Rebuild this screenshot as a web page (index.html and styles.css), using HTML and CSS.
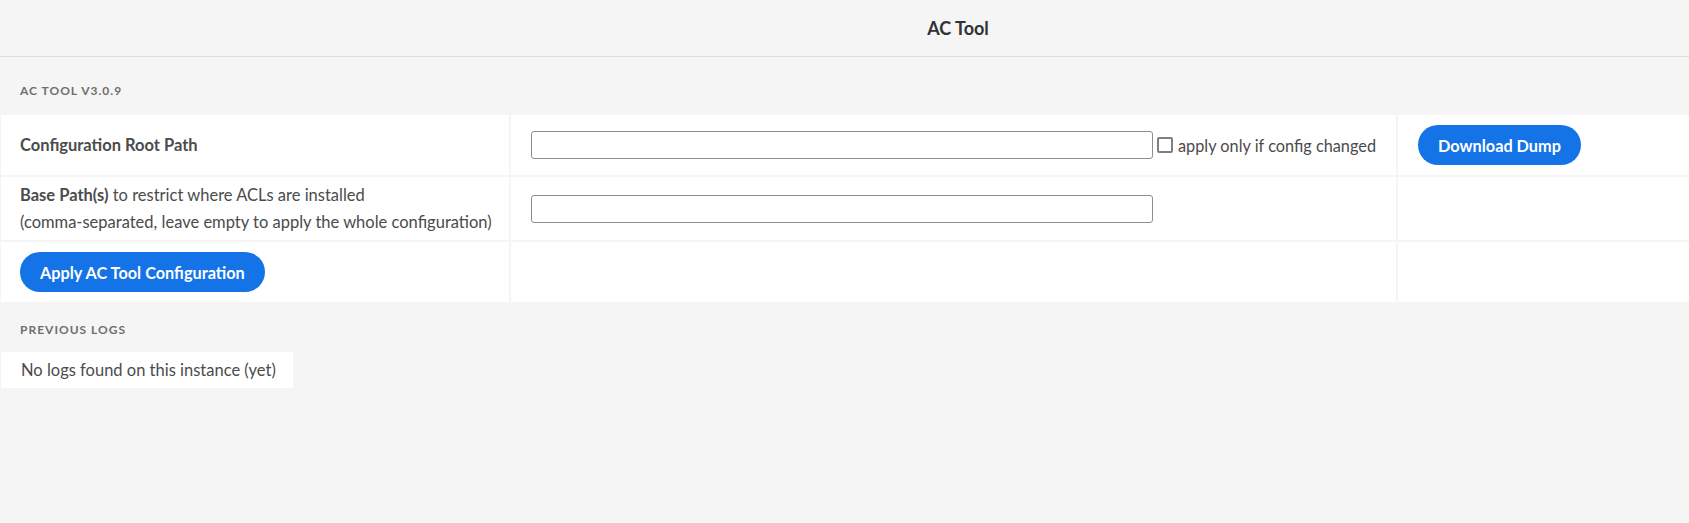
FILE: index.html
```html
<!DOCTYPE html>
<html lang="en">
<head>
<meta charset="utf-8">
<title>AC Tool</title>
<link rel="stylesheet" href="styles.css">
</head>
<body>
<header class="topbar">
  <h1 class="topbar-title">AC Tool</h1>
</header>
<main class="content">
  <h2 class="section-heading">AC Tool v3.0.9</h2>
  <div class="config-grid">
    <div class="cell cell-label"><strong>Configuration Root Path</strong></div>
    <div class="cell cell-field">
      <input class="text-input" type="text">
      <label class="check">
        <span class="check-box"></span>
        <span class="check-text">apply only if config changed</span>
      </label>
    </div>
    <div class="cell cell-action"><button class="btn">Download Dump</button></div>

    <div class="cell cell-label cell-label-multi"><strong>Base Path(s)</strong> to restrict where ACLs are installed<br>(comma-separated, leave empty to apply the whole configuration)</div>
    <div class="cell cell-field"><input class="text-input" type="text"></div>
    <div class="cell cell-action"></div>

    <div class="cell cell-label"><button class="btn">Apply AC Tool Configuration</button></div>
    <div class="cell cell-field"></div>
    <div class="cell cell-action"></div>
  </div>
  <h2 class="section-heading section-heading-logs">Previous Logs</h2>
  <div class="logs-box">No logs found on this instance (yet)</div>
</main>
</body>
</html>
```
FILE: styles.css
```css
* { box-sizing: border-box; }

html, body {
  margin: 0;
  padding: 0;
  background: #f5f5f5;
  font-family: Lato, "Open Sans", sans-serif;
  color: #4b4b4b;
  font-size: 16.5px;
}

.topbar {
  height: 57px;
  border-bottom: 1px solid #dedede;
  display: flex;
  align-items: center;
  justify-content: center;
  padding-left: 227px;
}

.topbar-title {
  margin: 0;
  font-size: 18px;
  font-weight: 700;
  color: #323232;
  line-height: 22px;
}

.content {
  padding-top: 26px;
}

.section-heading {
  margin: 0 0 16px 20px;
  font-size: 12px;
  line-height: 16px;
  font-weight: 700;
  text-transform: uppercase;
  letter-spacing: 1px;
  color: #6e6e6e;
}

.section-heading-logs {
  margin-top: 20px;
  margin-bottom: 14px;
}

.config-grid {
  display: grid;
  margin-left: 1px;
  grid-template-columns: 508px 885px 1fr;
  grid-template-rows: 60px 63px 60px;
  gap: 2px;
}

.cell {
  background: #fff;
  display: flex;
  align-items: center;
  padding-left: 20px;
}

.cell-label {
  padding-left: 19px;
}

.cell-label strong {
  font-weight: 700;
}

.cell-label-multi {
  display: block;
  padding-top: 5px;
  line-height: 27px;
}

.text-input {
  width: 622px;
  height: 28px;
  border: 1px solid #8e8e8e;
  border-radius: 3px;
  background: #fff;
  margin: 0;
  padding: 0 6px;
  font: inherit;
}

.check {
  display: flex;
  align-items: center;
  margin-left: 4px;
}

.check-box {
  width: 16px;
  height: 16px;
  border: 2px solid #808080;
  border-radius: 2px;
  background: #fff;
}

.check-text {
  margin-left: 5px;
  font-size: 16.3px;
}

.btn {
  height: 40px;
  padding: 0 20px;
  border: 0;
  border-radius: 20px;
  background: #1473e6;
  color: #fff;
  font-family: inherit;
  font-size: 16.3px;
  font-weight: 700;
  cursor: pointer;
}

.logs-box {
  margin-left: 1px;
  width: 292px;
  height: 36px;
  line-height: 36px;
  padding-left: 20px;
  background: #fff;
}
```
